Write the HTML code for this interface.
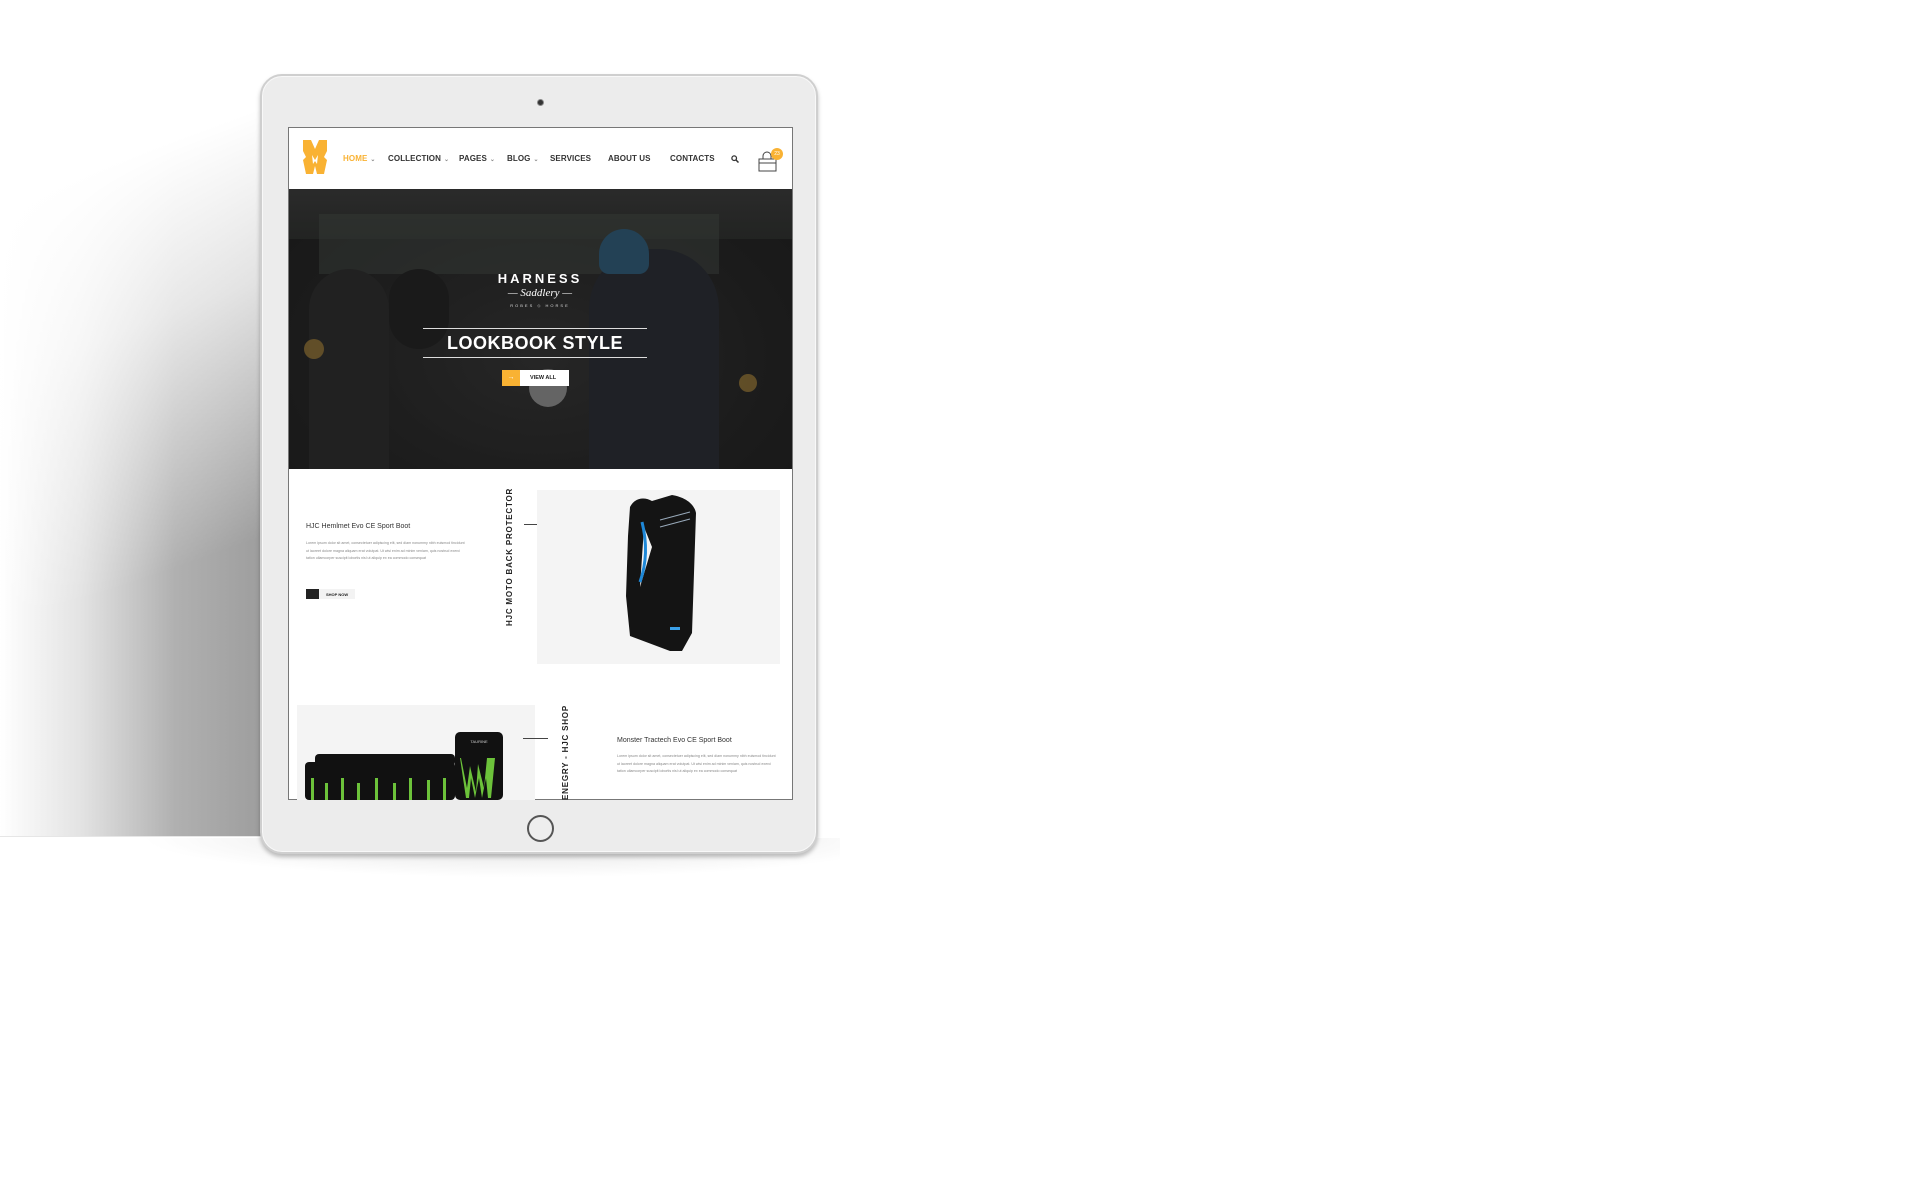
<!DOCTYPE html>
<html><head><meta charset="utf-8"><style>
*{margin:0;padding:0;box-sizing:border-box}
body{width:1920px;height:1199px;background:#fff;position:relative;overflow:hidden;font-family:"Liberation Sans",sans-serif}
.abs{position:absolute}
.nav{position:absolute;top:154px;font-size:8px;font-weight:bold;color:#333;letter-spacing:.1px;white-space:nowrap}
.nav i{font-style:normal;font-size:6px;color:#888;margin-left:3px}
.para{font-size:3.6px;line-height:7.6px;color:#888}
.vt{position:absolute;transform:rotate(-90deg);transform-origin:left top;font-size:8px;font-weight:bold;letter-spacing:.8px;color:#222;white-space:nowrap}
</style></head><body>
<!-- shadow -->
<div class="abs" style="left:0;top:74px;width:270px;height:762px;background:linear-gradient(90deg,rgba(255,255,255,0) 0%,rgba(215,215,215,.7) 30%,#b0b0b0 65%,#9c9c9c 100%)"></div>
<div class="abs" style="left:0;top:74px;width:270px;height:762px;background:linear-gradient(160deg,#fff 15%,rgba(255,255,255,.7) 35%,rgba(255,255,255,0) 65%)"></div>
<div class="abs" style="left:0;top:836px;width:300px;height:1px;background:#e6e6e6"></div>
<div class="abs" style="left:140px;top:838px;width:700px;height:40px;background:radial-gradient(ellipse at 55% 0%,rgba(150,150,150,.3),rgba(255,255,255,0) 70%)"></div>
<!-- tablet -->
<div class="abs" style="left:260px;top:74px;width:558px;height:780px;border-radius:22px;background:#ececec;border:2px solid #cfcfcf;box-shadow:inset 0 0 0 1px #f8f8f8,0 3px 4px rgba(0,0,0,.25)"></div>
<div class="abs" style="left:537px;top:99px;width:7px;height:7px;border-radius:50%;background:#333;border:1px solid #888"></div>
<div class="abs" style="left:527px;top:815px;width:27px;height:27px;border-radius:50%;border:2px solid #555;background:#eee"></div>
<!-- screen -->
<div class="abs" style="left:288px;top:127px;width:505px;height:673px;background:#fff;border:1px solid #777;overflow:hidden">
</div>
<!-- header -->
<svg class="abs" style="left:302px;top:140px" width="27" height="34" viewBox="0 0 27 34"><path d="M1 0h8l4 9 4-9h8v11l-3 6 3 3-3 14h-7l-2-8-2 8H4L1 20l3-3-3-6z" fill="#f9b233"/><path d="M10 15l3 5 3-5-1 9-2-3-2 3z" fill="#fff"/></svg>
<div class="nav" style="left:343px;color:#f9b233">HOME<i>⌄</i></div>
<div class="nav" style="left:388px">COLLECTION<i>⌄</i></div>
<div class="nav" style="left:459px">PAGES<i>⌄</i></div>
<div class="nav" style="left:507px">BLOG<i>⌄</i></div>
<div class="nav" style="left:550px">SERVICES</div>
<div class="nav" style="left:608px">ABOUT US</div>
<div class="nav" style="left:670px">CONTACTS</div>
<svg class="abs" style="left:731px;top:155px" width="8" height="8" viewBox="0 0 8 8"><circle cx="3.2" cy="3.2" r="2.3" fill="none" stroke="#333" stroke-width="1.3"/><path d="M5 5l2.5 2.5" stroke="#333" stroke-width="1.5"/></svg>
<svg class="abs" style="left:758px;top:150px" width="20" height="22" viewBox="0 0 20 22"><path d="M1 9h17v12H1zM1 13h17" fill="none" stroke="#444" stroke-width="1"/><path d="M5 9V6a4 4 0 0 1 8 0v3" fill="none" stroke="#444" stroke-width="1"/></svg>
<div class="abs" style="left:771px;top:148px;width:12px;height:12px;border-radius:50%;background:#f9b233;color:#fff;font-size:5px;text-align:center;line-height:12px">23</div>
<!-- hero -->
<div class="abs" style="left:289px;top:189px;width:503px;height:280px;overflow:hidden;background:radial-gradient(ellipse at 50% 60%,#333 0%,#222 60%,#1a1a1a 100%)">
 <div class="abs" style="left:0;top:0;width:503px;height:50px;background:linear-gradient(#3a3a3a,#2c2f2c)"></div>
 <div class="abs" style="left:30px;top:25px;width:400px;height:60px;background:#4a524c;opacity:.5"></div>
 <div class="abs" style="left:20px;top:80px;width:80px;height:200px;background:#2a2a2a;border-radius:40px 40px 0 0"></div>
 <div class="abs" style="left:300px;top:60px;width:130px;height:220px;background:#272b32;border-radius:60px 60px 0 0"></div>
 <div class="abs" style="left:310px;top:40px;width:50px;height:45px;background:#2e5f80;border-radius:25px 25px 10px 10px"></div>
 <div class="abs" style="left:100px;top:80px;width:60px;height:80px;background:#1e1e1e;border-radius:30px"></div>
 <div class="abs" style="left:240px;top:180px;width:38px;height:38px;border-radius:50%;background:#9a9a9a"></div>
 <div class="abs" style="left:15px;top:150px;width:20px;height:20px;border-radius:50%;background:#b08a3a;opacity:.8"></div>
 <div class="abs" style="left:450px;top:185px;width:18px;height:18px;border-radius:50%;background:#b08a3a;opacity:.8"></div>
 <div class="abs" style="left:0;top:0;width:503px;height:280px;background:rgba(20,20,20,.4)"></div>
</div>
<div class="abs" style="left:480px;top:271px;width:120px;text-align:center;color:#fff;font-size:13px;font-weight:bold;letter-spacing:3px">HARNESS</div>
<div class="abs" style="left:480px;top:287px;width:120px;text-align:center;color:#fff;font-family:'Liberation Serif',serif;font-style:italic;font-size:11px">— Saddlery —</div>
<div class="abs" style="left:480px;top:303px;width:120px;text-align:center;color:#ddd;font-size:4px;letter-spacing:2px">ROBES ◇ HORSE</div>
<div class="abs" style="left:423px;top:328px;width:224px;height:1px;background:#ddd"></div>
<div class="abs" style="left:423px;top:357px;width:224px;height:1px;background:#ddd"></div>
<div class="abs" style="left:423px;top:333px;width:224px;text-align:center;color:#fff;font-size:18px;font-weight:bold;letter-spacing:.5px">LOOKBOOK STYLE</div>
<div class="abs" style="left:502px;top:370px;width:67px;height:16px;background:#fff"></div>
<div class="abs" style="left:502px;top:370px;width:18px;height:16px;background:#f9b233;color:#fff;font-size:7px;text-align:center;line-height:16px">→</div>
<div class="abs" style="left:530px;top:375px;font-size:5.5px;font-weight:bold;color:#222">VIEW ALL</div>
<!-- section 1 -->
<div class="abs" style="left:306px;top:523px;font-size:7px;color:#333">HJC Hemlmet Evo CE Sport Boot</div>
<div class="abs para" style="left:306px;top:540px;width:160px">Lorem ipsum dolor sit amet, consectetuer adipiscing elit, sed diam nonummy nibh euismod tincidunt ut laoreet dolore magna aliquam erat volutpat. Ut wisi enim ad minim veniam, quis nostrud exerci tation ullamcorper suscipit lobortis nisl ut aliquip ex ea commodo consequat</div>
<div class="abs" style="left:306px;top:589px;width:49px;height:10px;background:#f3f3f3"></div>
<div class="abs" style="left:306px;top:589px;width:13px;height:10px;background:#222"></div>
<div class="abs" style="left:326px;top:592px;font-size:4px;font-weight:bold;color:#222">SHOP NOW</div>
<div class="vt" style="left:505px;top:626px">HJC MOTO BACK PROTECTOR</div>
<div class="abs" style="left:524px;top:524px;width:27px;height:1px;background:#444"></div>
<div class="abs" style="left:537px;top:490px;width:243px;height:174px;background:#f4f4f4"></div>
<svg class="abs" style="left:620px;top:492px" width="90" height="170" viewBox="0 0 90 170"><path d="M10 15c5-10 15-10 22-6l20-6c12 2 22 8 24 18l-4 120-10 18h-12l-40-15-4-40 2-60zm14 20l-4 60 12-40z" fill="#141414"/><path d="M22 30c5 20 5 40-2 60" stroke="#1e88d8" stroke-width="3" fill="none"/><path d="M40 35l30-8M40 28l30-8" stroke="#9ab" stroke-width="1"/><rect x="50" y="135" width="10" height="3" fill="#3aa0e8"/></svg>
<!-- section 2 -->
<div class="abs" style="left:297px;top:705px;width:238px;height:95px;background:#f4f4f4"></div>
<svg class="abs" style="left:305px;top:728px" width="200" height="72" viewBox="0 0 200 72"><g fill="#111"><rect x="0" y="34" width="150" height="38" rx="4"/><rect x="10" y="26" width="140" height="12" rx="4"/><rect x="150" y="4" width="48" height="68" rx="5"/></g><g fill="#6cc23a"><path d="M156 30l6 30 3-22 6 26 2-28 6 24 3-30h8l-4 40h-3l-2-20-4 20-3-20-4 20-4-20-2 20h-3l-6-40z"/><rect x="6" y="50" width="3" height="22"/><rect x="20" y="55" width="3" height="17"/><rect x="36" y="50" width="3" height="22"/><rect x="52" y="55" width="3" height="17"/><rect x="70" y="50" width="3" height="22"/><rect x="88" y="55" width="3" height="17"/><rect x="104" y="50" width="3" height="22"/><rect x="122" y="52" width="3" height="20"/><rect x="138" y="50" width="3" height="22"/></g><text x="174" y="15" font-size="4" fill="#ccc" text-anchor="middle" font-family="Liberation Sans">TAURINE</text></svg>
<div class="abs" style="left:523px;top:738px;width:25px;height:1px;background:#444"></div>
<div class="vt" style="left:561px;top:800px">ENEGRY - HJC SHOP</div>
<div class="abs" style="left:617px;top:737px;font-size:7px;color:#333">Monster Tractech Evo CE Sport Boot</div>
<div class="abs para" style="left:617px;top:753px;width:160px">Lorem ipsum dolor sit amet, consectetuer adipiscing elit, sed diam nonummy nibh euismod tincidunt ut laoreet dolore magna aliquam erat volutpat. Ut wisi enim ad minim veniam, quis nostrud exerci tation ullamcorper suscipit lobortis nisl ut aliquip ex ea commodo consequat</div>
</body></html>
